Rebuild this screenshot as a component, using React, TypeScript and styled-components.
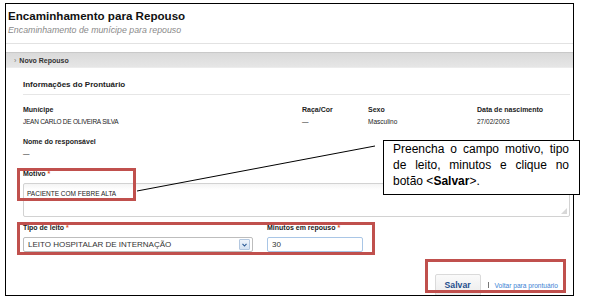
import React from 'react';
import styled, { createGlobalStyle } from 'styled-components';

const Global = createGlobalStyle`
  html, body { margin: 0; padding: 0; background: #fff; }
  body { font-family: "Liberation Sans", Arial, sans-serif; color: #222; }
`;

const Page = styled.div`
  position: relative;
  width: 591px;
  height: 301px;
  overflow: hidden;
  box-sizing: border-box;
  padding: 3px 0 0 5px;
`;

const Frame = styled.div`
  width: 567px;
  height: 291px;
  border: 1px solid #000;
  overflow: hidden;
  background: #fff;
`;

const Header = styled.div`
  padding: 4px 0 0 2px;
`;

const Title = styled.h1`
  margin: 0;
  font-size: 11.6px;
  line-height: 16px;
  font-weight: 700;
  color: #111;
`;

const Subtitle = styled.div`
  margin-top: 1px;
  font-size: 8.8px;
  line-height: 10px;
  font-style: italic;
  color: #8a8a8a;
`;

const Separator = styled.div`
  margin-top: 8px;
  height: 1px;
  background: #e2e2e2;
`;

const SectionBar = styled.div`
  margin-top: 8px;
  height: 14px;
  border-top: 1px solid #c9c9c9;
  border-bottom: 1px solid #ececec;
  background: linear-gradient(#dadada, #e6e6e6);
  display: flex;
  align-items: center;
  gap: 3px;
  padding-left: 8px;
  font-size: 7px;
  font-weight: 700;
  color: #333;
`;

const Chevron = styled.span`
  font-weight: 400;
  color: #777;
  font-size: 7px;
`;

const Content = styled.div`
  padding: 0 3px 0 17px;
`;

const SectionTitle = styled.div`
  margin-top: 12px;
  padding-bottom: 4px;
  border-bottom: 1px solid #e6e6e6;
  font-size: 8px;
  line-height: 10px;
  font-weight: 700;
  color: #222;
`;

const InfoGrid = styled.div`
  margin-top: 10px;
  display: grid;
  grid-template-columns: 279px 66px 109px 1fr;
`;

const Field = styled.div<{ $top?: number }>`
  margin-top: ${p => p.$top ?? 0}px;
`;

const Label = styled.div`
  font-size: 7px;
  line-height: 10px;
  font-weight: 700;
  color: #222;
`;

const Required = styled.span`
  color: #e0501c;
  margin-left: 2px;
`;

const Value = styled.div<{ $tight?: boolean }>`
  margin-top: 2px;
  font-size: 6.5px;
  line-height: 10px;
  color: #222;
  letter-spacing: ${p => (p.$tight ? '-0.25px' : '0')};
`;

const TextArea = styled.div`
  margin-top: 4px;
  height: 34px;
  box-sizing: border-box;
  border: 1px solid #d2d2d2;
  border-radius: 2px;
  background: linear-gradient(#f4f4f4, #fff 6px);
  padding: 5px 3px;
  font-size: 6.5px;
  line-height: 10px;
  color: #222;
  position: relative;
`;

const Grip = styled.span`
  position: absolute;
  right: 2px;
  bottom: 2px;
  width: 6px;
  height: 6px;
  background: radial-gradient(circle, #aaa 0.6px, transparent 0.8px) 0 0 / 2px 2px;
  clip-path: polygon(100% 0, 100% 100%, 0 100%);
`;

const FormRow = styled.div`
  margin-top: 6px;
  display: flex;
  gap: 14px;
`;

const SelectBox = styled.div`
  margin-top: 4px;
  width: 230px;
  height: 15px;
  box-sizing: border-box;
  border: 1px solid #bdbdbd;
  border-radius: 2px;
  display: flex;
  align-items: center;
  justify-content: space-between;
  padding: 0 2px 0 4px;
  font-size: 8px;
  color: #333;
`;

const ArrowBtn = styled.span`
  width: 9px;
  height: 9px;
  border: 1px solid #b4c8e0;
  border-radius: 1px;
  background: linear-gradient(#eef4fb, #d4e2f2);
  display: flex;
  align-items: center;
  justify-content: center;
`;

const Input = styled.div`
  margin-top: 4px;
  width: 96px;
  height: 15px;
  box-sizing: border-box;
  border: 1px solid #a9c6e6;
  border-radius: 2px;
  padding: 0 4px;
  display: flex;
  align-items: center;
  font-size: 8px;
  color: #333;
`;

const Actions = styled.div`
  margin-top: 22px;
  display: flex;
  align-items: center;
  justify-content: flex-end;
  padding-right: 12px;
`;

const SaveButton = styled.button`
  width: 46px;
  height: 22px;
  border: 1px solid #dadada;
  border-radius: 2px;
  background: linear-gradient(#fafafa, #ececec);
  font-family: "Liberation Sans", Arial, sans-serif;
  font-size: 8.7px;
  font-weight: 700;
  color: #1f4f8d;
  padding: 0;
`;

const Pipe = styled.span`
  margin: 0 6px 0 7px;
  width: 1px;
  height: 6px;
  background: #777;
`;

const Link = styled.a`
  font-size: 6.6px;
  color: #3b7fd3;
  text-decoration: none;
`;

const Highlight = styled.div<{ $x: number; $y: number; $w: number; $h: number }>`
  position: absolute;
  left: ${p => p.$x}px;
  top: ${p => p.$y}px;
  width: ${p => p.$w}px;
  height: ${p => p.$h}px;
  box-sizing: border-box;
  border: 3px solid #c0504d;
  pointer-events: none;
`;

const Leader = styled.svg`
  position: absolute;
  left: 0;
  top: 0;
  pointer-events: none;
`;

const Callout = styled.div`
  position: absolute;
  left: 383px;
  top: 140px;
  width: 197px;
  height: 55px;
  box-sizing: border-box;
  border: 1px solid #000;
  background: #fff;
  padding: 0 10px 0 9px;
  font-family: "Liberation Sans", Arial, sans-serif;
  font-size: 12px;
  line-height: 16px;
  text-align: justify;
  color: #000;
`;

const info = [
  { label: 'Munícipe', value: 'JEAN CARLO DE OLIVEIRA SILVA', tight: true },
  { label: 'Raça/Cor', value: '—' },
  { label: 'Sexo', value: 'Masculino' },
  { label: 'Data de nascimento', value: '27/02/2003' },
];

export default function App() {
  return (
    <Page>
      <Global />
      <Frame>
        <Header>
          <Title>Encaminhamento para Repouso</Title>
          <Subtitle>Encaminhamento de munícipe para repouso</Subtitle>
        </Header>
        <Separator />
        <SectionBar>
          <Chevron>›</Chevron>
          Novo Repouso
        </SectionBar>
        <Content>
          <SectionTitle>Informações do Prontuário</SectionTitle>
          <InfoGrid>
            {info.map(f => (
              <Field key={f.label}>
                <Label>{f.label}</Label>
                <Value $tight={f.tight}>{f.value}</Value>
              </Field>
            ))}
          </InfoGrid>
          <Field $top={10}>
            <Label>Nome do responsável</Label>
            <Value>—</Value>
          </Field>
          <Field $top={10}>
            <Label>Motivo<Required>*</Required></Label>
            <TextArea>
              PACIENTE COM FEBRE ALTA
              <Grip />
            </TextArea>
          </Field>
          <FormRow>
            <Field>
              <Label>Tipo de leito<Required>*</Required></Label>
              <SelectBox>
                LEITO HOSPITALAR DE INTERNAÇÃO
                <ArrowBtn>
                  <svg width="5" height="4" viewBox="0 0 5 4">
                    <path d="M0.5 0.8 L2.5 3 L4.5 0.8" fill="none" stroke="#2b5a95" strokeWidth="1.1" />
                  </svg>
                </ArrowBtn>
              </SelectBox>
            </Field>
            <Field>
              <Label>Minutos em repouso<Required>*</Required></Label>
              <Input>30</Input>
            </Field>
          </FormRow>
          <Actions>
            <SaveButton>Salvar</SaveButton>
            <Pipe />
            <Link href="#">Voltar para prontuário</Link>
          </Actions>
        </Content>
      </Frame>

      <Highlight $x={17} $y={168} $w={119} $h={33} />
      <Highlight $x={17} $y={222} $w={358} $h={33} />
      <Highlight $x={425} $y={259} $w={141} $h={34} />

      <Leader width="591" height="301">
        <line x1="137" y1="191" x2="375" y2="146" stroke="#000" strokeWidth="1" />
      </Leader>

      <Callout>
        Preencha o campo motivo, tipo de leito, minutos e clique no botão &lt;<b>Salvar</b>&gt;.
      </Callout>
    </Page>
  );
}
